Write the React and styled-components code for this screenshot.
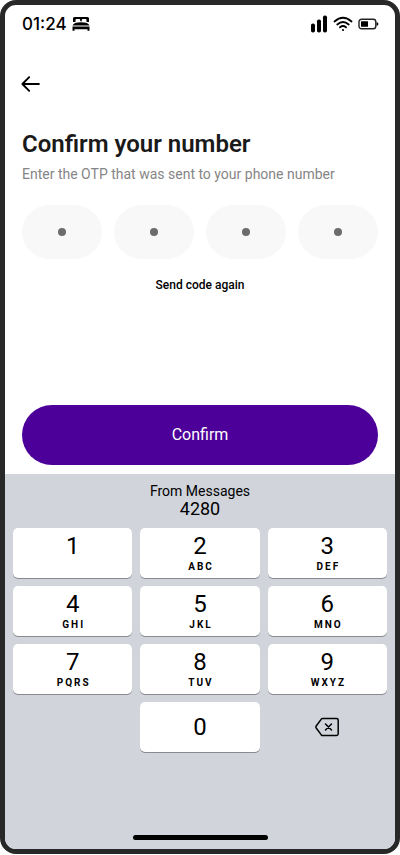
import React from 'react';
import styled, { createGlobalStyle } from 'styled-components';

const GlobalStyle = createGlobalStyle`
  *, *::before, *::after { box-sizing: border-box; }
  body { margin: 0; background: #fff; }
  button, input { font: inherit; color: inherit; }
`;

const Phone = styled.div`
  display: flex;
  flex-direction: column;
  min-height: calc(100vh - 1px);
  border: 5px solid #282828;
  border-radius: 16px;
  overflow: hidden;
  background: #fff;
  color: #000;
  font-family: Roboto, sans-serif;
`;

const StatusBar = styled.header`
  display: flex;
  align-items: center;
  justify-content: space-between;
  height: 38px;
  padding: 0 16px 0 17px;
`;

const StatusGroup = styled.div`
  display: flex;
  align-items: center;
  gap: 5px;
`;

const Clock = styled.time`
  font: 500 17px/20px Inter, sans-serif;
`;

const Content = styled.main`
  display: flex;
  flex-direction: column;
  flex: 1;
  padding: 28px 17px 9px;
`;

const BackButton = styled.button`
  display: flex;
  align-items: center;
  align-self: flex-start;
  height: 26px;
  margin-left: -2px;
  padding: 0;
  border: 0;
  background: none;
`;

const Title = styled.h1`
  margin: 32px 0 0;
  color: #1a1a1a;
  font-size: 24px;
  font-weight: 600;
  line-height: 30px;
`;

const Subtitle = styled.p`
  margin: 6px 0 0;
  color: #858585;
  font-size: 14px;
  line-height: 18px;
`;

const CodeForm = styled.form`
  display: flex;
  flex-direction: column;
  flex: 1;
  margin-top: 22px;
`;

const CodeRow = styled.div`
  display: grid;
  grid-template-columns: repeat(4, 1fr);
  gap: 12px;
`;

const CodeCell = styled.label`
  position: relative;
  display: flex;
  align-items: center;
  justify-content: center;
  height: 54px;
  border-radius: 27px;
  background: #f8f8f8;

  &::after {
    content: '';
    position: absolute;
    width: 8px;
    height: 8px;
    border-radius: 50%;
    background: #6c6c6c;
  }
`;

const CodeInput = styled.input`
  width: 100%;
  height: 100%;
  padding: 0;
  border: 0;
  border-radius: inherit;
  background: none;
  color: transparent;
  text-align: center;
`;

const ResendButton = styled.button`
  align-self: center;
  margin-top: 18px;
  padding: 0;
  border: 0;
  background: none;
  font-size: 12px;
  font-weight: 500;
  line-height: 16px;
`;

const ConfirmButton = styled.button`
  height: 60px;
  margin-top: auto;
  border: 0;
  border-radius: 30px;
  background: #4c0099;
  color: #fff;
  font-size: 16px;
  line-height: 20px;
`;

const Keyboard = styled.section`
  display: flex;
  flex-direction: column;
  height: 375px;
  padding: 8px 8px 9px;
  background: #d1d4db;
`;

const Suggestion = styled.button`
  display: flex;
  flex-direction: column;
  align-items: center;
  padding: 0;
  border: 0;
  background: none;
  font-size: 14px;
  line-height: 18px;
`;

const SuggestedCode = styled.span`
  font-size: 18px;
  line-height: 18px;
`;

const Keys = styled.div`
  display: grid;
  grid-template-columns: repeat(3, 1fr);
  grid-auto-rows: 50px;
  gap: 8px;
  margin-top: 10px;
`;

const Key = styled.button`
  display: flex;
  flex-direction: column;
  align-items: center;
  justify-content: ${({ $centered }) => ($centered ? 'center' : 'flex-start')};
  grid-column: ${({ $column }) => $column || 'auto'};
  padding: ${({ $centered }) => ($centered ? 0 : '4px 0 0')};
  border: 0;
  border-radius: 5px;
  background: ${({ $plain }) => ($plain ? 'none' : '#fff')};
  box-shadow: ${({ $plain }) => ($plain ? 'none' : '0 1px 0 #898a8d')};
`;

const Digit = styled.span`
  font-size: 24px;
  line-height: 28px;
`;

const Letters = styled.span`
  padding: 1px 0 0 2px;
  font-size: 10px;
  font-weight: 700;
  line-height: 12px;
  letter-spacing: 2px;
`;

const HomeIndicator = styled.div`
  width: 135px;
  height: 5px;
  margin: auto auto 0;
  border-radius: 3px;
  background: #000;
`;

const KEYS = [
  ['1', ''], ['2', 'ABC'], ['3', 'DEF'],
  ['4', 'GHI'], ['5', 'JKL'], ['6', 'MNO'],
  ['7', 'PQRS'], ['8', 'TUV'], ['9', 'WXYZ'],
];

const BedIcon = () => (
  <svg width="18" height="14" viewBox="0 0 18 14" aria-hidden="true">
    <path d="M1 5V1.500Q1 0 2.500 0H15.500Q17 0 17 1.500V5H14.500V3Q14.500 2 13.500 2H10.800Q9.800 2 9.800 3V4.200H8.200V3Q8.200 2 7.200 2H4.500Q3.500 2 3.500 3V5Z" />
    <path d="M.5 8.600Q1.500 5.200 9 5.200T17.500 8.600Z" />
    <path d="M.5 9.500H17.500V13.700H15.500V12.200H2.500V13.700H.5Z" />
  </svg>
);

const SignalIcon = () => (
  <svg width="17" height="18" viewBox="0 0 17 18" aria-hidden="true">
    <rect x="0" y="8.500" width="4" height="9" rx="1.800" />
    <rect x="6" y="4.500" width="4" height="13" rx="1.800" />
    <rect x="12" y=".5" width="4" height="17" rx="1.800" />
  </svg>
);

const WifiIcon = () => (
  <svg width="20" height="16" viewBox="0 0 20 16" fill="none" stroke="#000" strokeWidth="1.800" strokeLinecap="round" aria-hidden="true">
    <path d="M1.500 5.500Q10 -2 18.500 5.500M4.300 8.500Q10 3.500 15.700 8.500M7 11.300Q10 8.800 13 11.300" />
    <circle cx="10" cy="14" r="1.100" fill="#000" stroke="none" />
  </svg>
);

const BatteryIcon = () => (
  <svg width="21" height="12" viewBox="0 0 21 12" aria-hidden="true">
    <rect x="1" y="1.200" width="16.800" height="9.600" rx="2.500" fill="none" stroke="#222" strokeWidth="1.400" />
    <rect x="3" y="3.300" width="7" height="5.400" rx=".5" />
    <path d="M18.600 4Q20.400 4.300 20.400 6T18.600 8Z" />
  </svg>
);

const ArrowLeftIcon = () => (
  <svg width="20" height="18" viewBox="0 0 20 18" fill="none" stroke="#000" strokeWidth="1.900" strokeLinecap="round" strokeLinejoin="round" aria-hidden="true">
    <path d="M18.900 9H3M9.200 2.200L2.400 9L9.200 15.800" />
  </svg>
);

const DeleteIcon = () => (
  <svg width="24" height="20" viewBox="0 0 24 20" fill="none" stroke="#000" strokeWidth="1.500" strokeLinecap="round" strokeLinejoin="round" aria-hidden="true">
    <path d="M7.600 1.500H21.500Q23.200 1.500 23.200 3.200V16.800Q23.200 18.500 21.500 18.500H7.600Q6.800 18.500 6.300 17.900L1.200 11Q.6 10 1.200 9L6.300 2.100Q6.800 1.500 7.600 1.500Z" />
    <path d="M10.500 7L16.500 13M16.500 7L10.500 13" />
  </svg>
);

export default function App() {
  return (
    <>
      <GlobalStyle />
      <Phone>
        <StatusBar>
          <StatusGroup>
            <Clock>01:24</Clock>
            <BedIcon />
          </StatusGroup>
          <StatusGroup>
            <SignalIcon />
            <WifiIcon />
            <BatteryIcon />
          </StatusGroup>
        </StatusBar>
        <Content>
          <BackButton type="button" aria-label="Back">
            <ArrowLeftIcon />
          </BackButton>
          <Title>Confirm your number</Title>
          <Subtitle>Enter the OTP that was sent to your phone number</Subtitle>
          <CodeForm onSubmit={(event) => event.preventDefault()}>
            <CodeRow>
              {[1, 2, 3, 4].map((position) => (
                <CodeCell key={position}>
                  <CodeInput type="text" inputMode="numeric" maxLength={1} aria-label={`Digit ${position}`} />
                </CodeCell>
              ))}
            </CodeRow>
            <ResendButton type="button">Send code again</ResendButton>
            <ConfirmButton type="submit">Confirm</ConfirmButton>
          </CodeForm>
        </Content>
        <Keyboard aria-label="Number keyboard">
          <Suggestion type="button">
            <span>From Messages</span>
            <SuggestedCode>4280</SuggestedCode>
          </Suggestion>
          <Keys>
            {KEYS.map(([digit, letters]) => (
              <Key key={digit} type="button">
                <Digit>{digit}</Digit>
                {letters && <Letters>{letters}</Letters>}
              </Key>
            ))}
            <Key type="button" $column={2} $centered>
              <Digit>0</Digit>
            </Key>
            <Key type="button" $plain $centered aria-label="Delete">
              <DeleteIcon />
            </Key>
          </Keys>
          <HomeIndicator />
        </Keyboard>
      </Phone>
    </>
  );
}
